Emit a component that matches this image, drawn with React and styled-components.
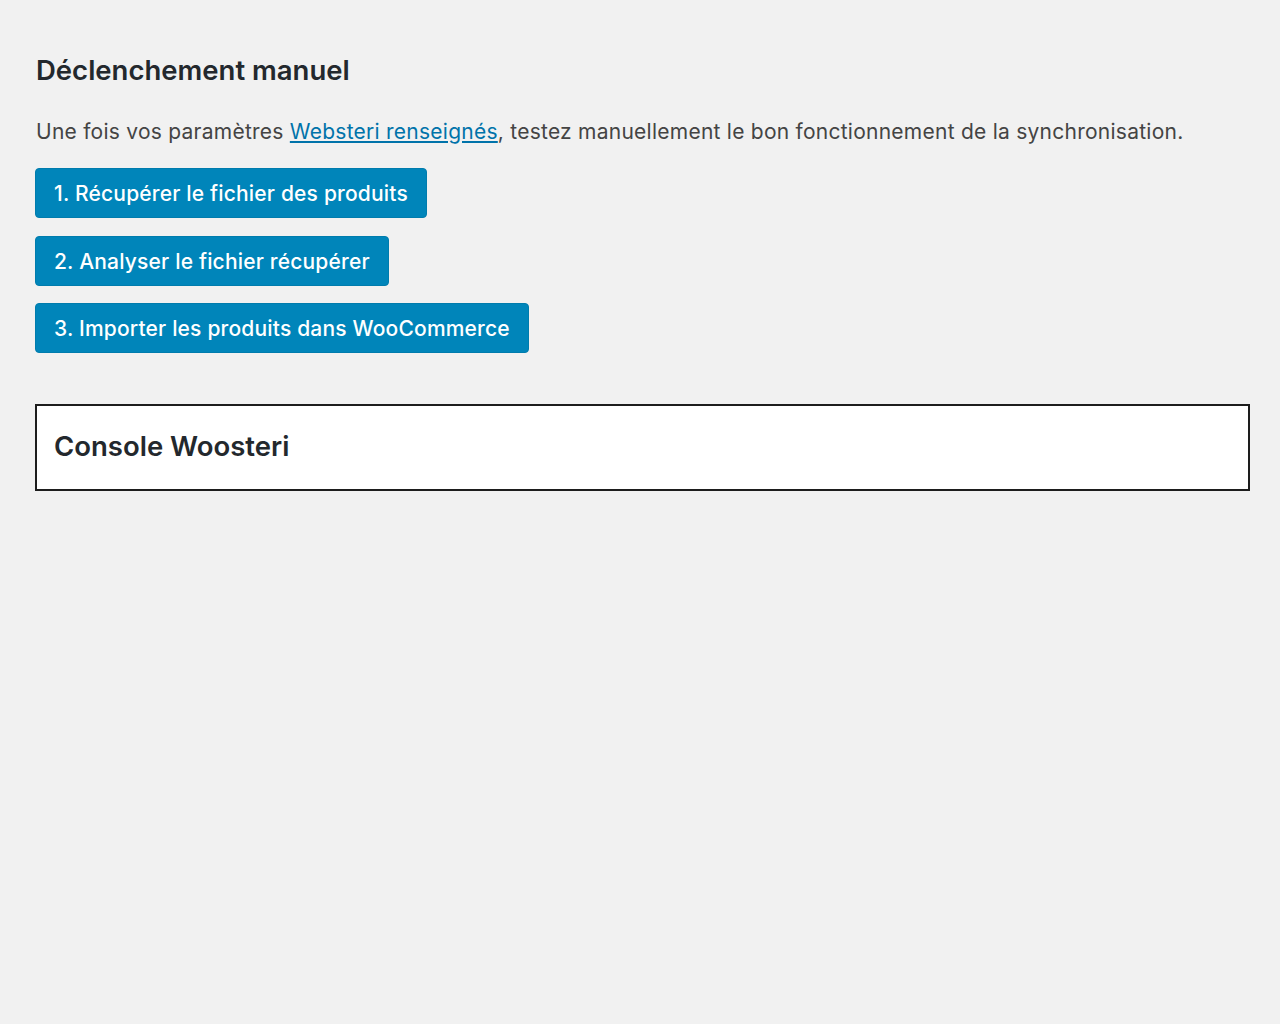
import React from "react";
import styled, { createGlobalStyle } from "styled-components";

const Global = createGlobalStyle`
  html, body { margin: 0; padding: 0; background: #f1f1f1; }
  body { font-family: Inter, "Noto Sans", "Liberation Sans", sans-serif; color: #444; }
`;

const Page = styled.div`
  padding: 52px 30px 40px 36px;
  display: flex;
  flex-direction: column;
`;

const Title = styled.h2`
  margin: 0;
  font-size: 27.5px;
  line-height: 36px;
  font-weight: 600;
  color: #23282d;
`;

const Intro = styled.p`
  margin: 29px 0 21px;
  font-size: 21px;
  letter-spacing: 0.25px;
  line-height: 30px;
  color: #444;
`;

const Link = styled.a`
  color: #0073aa;
  text-decoration: underline;
`;

const Buttons = styled.div`
  display: flex;
  flex-direction: column;
  align-items: flex-start;
  gap: 17.5px;
  margin-left: -1px;
`;

const Button = styled.button`
  height: 50px;
  padding: 1px 18px 0;
  background: #0085ba;
  border: 1px solid #007cad;
  border-radius: 4px;
  color: #fff;
  font-family: inherit;
  font-size: 21px;
  letter-spacing: 0.18px;
  font-weight: 500;
  cursor: pointer;
`;

const Console = styled.section`
  margin: 51px 0 0 -1px;
  background: #fff;
  border: 2px solid #1d1d1d;
  padding: 22px 17px 25px;
`;

const ConsoleTitle = styled.h3`
  margin: 0;
  font-size: 27.5px;
  line-height: 36px;
  font-weight: 600;
  color: #23282d;
`;

export default function App() {
  return (
    <>
      <Global />
      <Page>
        <Title>Déclenchement manuel</Title>
        <Intro>
          Une fois vos paramètres <Link href="#">Websteri renseignés</Link>, testez manuellement le bon fonctionnement de la synchronisation.
        </Intro>
        <Buttons>
          <Button>1. Récupérer le fichier des produits</Button>
          <Button>2. Analyser le fichier récupérer</Button>
          <Button>3. Importer les produits dans WooCommerce</Button>
        </Buttons>
        <Console>
          <ConsoleTitle>Console Woosteri</ConsoleTitle>
        </Console>
      </Page>
    </>
  );
}
